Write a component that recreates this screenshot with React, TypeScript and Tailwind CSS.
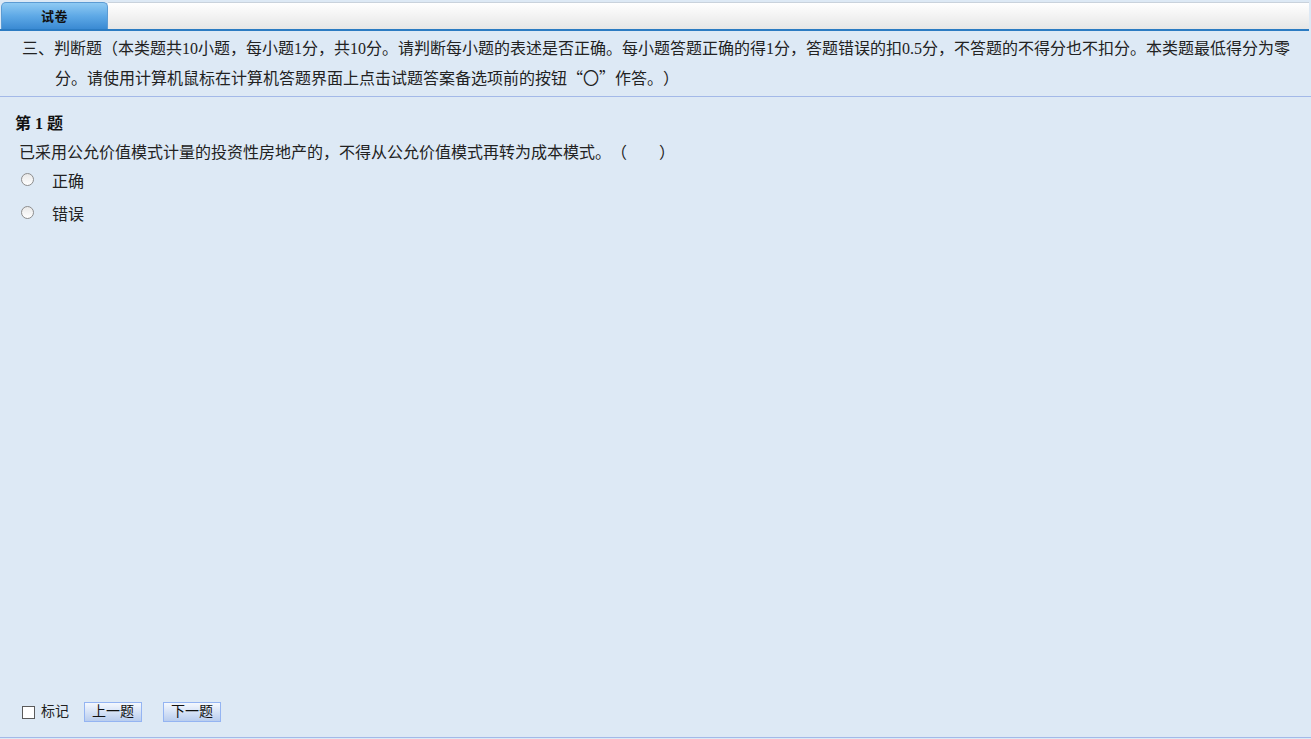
import React from "react";

const font = { fontFamily: '"Liberation Serif", "Noto Sans CJK SC", serif' };
const cjk = { fontFamily: '"Noto Sans CJK SC", sans-serif' };

function Radio() {
  return (
    <span className="inline-block w-[13px] h-[13px] mb-[5px] rounded-full border border-[#8d8d8d] bg-gradient-to-b from-[#e9e9e9] to-white shrink-0" />
  );
}

function Btn({ children }: { children: React.ReactNode }) {
  return (
    <button className="h-[20px] w-[58px] border border-[#94b4f2] bg-gradient-to-b from-[#f4f8fe] to-[#b9cdee] text-[14px] leading-[18px] text-[#111] flex items-center justify-center">
      {children}
    </button>
  );
}

export default function App() {
  return (
    <div lang="zh-CN" className="w-[1311px] h-[739px] bg-[#dde9f5] flex flex-col overflow-hidden text-[#222] [text-spacing-trim:space-all]" style={font}>
      {/* tab bar */}
      <div className="mt-[2px] mr-[2px] flex h-[29px] border-b-2 border-[#2b7bc2]">
        <div className="ml-[1px] w-[107px] rounded-t-[5px] border border-b-0 border-[#5c9bd3] bg-gradient-to-b from-[#8fcaf3] via-[#5ea9e6] to-[#3a8ad3] flex items-center justify-center">
          <span className="text-[13px] font-bold text-[#111] tracking-[0.5px]" style={cjk}>试卷</span>
        </div>
        <div className="flex-1 border-t border-[#c9d2dc] bg-gradient-to-b from-white to-[#e6e6e6]" />
      </div>
      {/* instructions */}
      <div className="pt-[3px] pb-[3px] pl-[55px] pr-[10px] border-b border-[#a3b9e8] text-[16px] leading-[29px]">
        <p className="-indent-[33px] whitespace-nowrap">
          三、判断题（本类题共10小题，每小题1分，共10分。请判断每小题的表述是否正确。每小题答题正确的得1分，答题错误的扣0.5分，不答题的不得分也不扣分。本类题最低得分为零
          <br />
          分。请使用计算机鼠标在计算机答题界面上点击试题答案备选项前的按钮<span style={cjk}>“〇”</span>作答。）
        </p>
      </div>
      {/* content */}
      <div className="flex-1 flex flex-col">
        <div className="pl-[15px] pt-[15px] text-[16px] leading-[24px] font-bold text-[#111]">第 1 题</div>
        <div className="pl-[19px] pt-[5px] text-[16px] leading-[24px]">
          已采用公允价值模式计量的投资性房地产的，不得从公允价值模式再转为成本模式。（&nbsp;&nbsp;&nbsp;&nbsp;&nbsp;&nbsp;&nbsp;&nbsp;）
        </div>
        <div className="flex items-center h-[33px] pl-[21px]">
          <Radio />
          <span className="ml-[18px] text-[16px] leading-[24px]">正确</span>
        </div>
        <div className="flex items-center h-[33px] pl-[21px]">
          <Radio />
          <span className="ml-[18px] text-[16px] leading-[24px]">错误</span>
        </div>
      </div>
      {/* footer */}
      <div className="flex items-center pl-[22px] pb-[15px] border-b border-[#a3b9e8] mb-[1px]">
        <span className="inline-block w-[13px] h-[13px] border border-[#5a5a5a] bg-white mt-[2px]" />
        <span className="ml-[6px] text-[14px] leading-[20px] mt-[1px]">标记</span>
        <div className="ml-[15px]"><Btn>上一题</Btn></div>
        <div className="ml-[21px]"><Btn>下一题</Btn></div>
      </div>
    </div>
  );
}
